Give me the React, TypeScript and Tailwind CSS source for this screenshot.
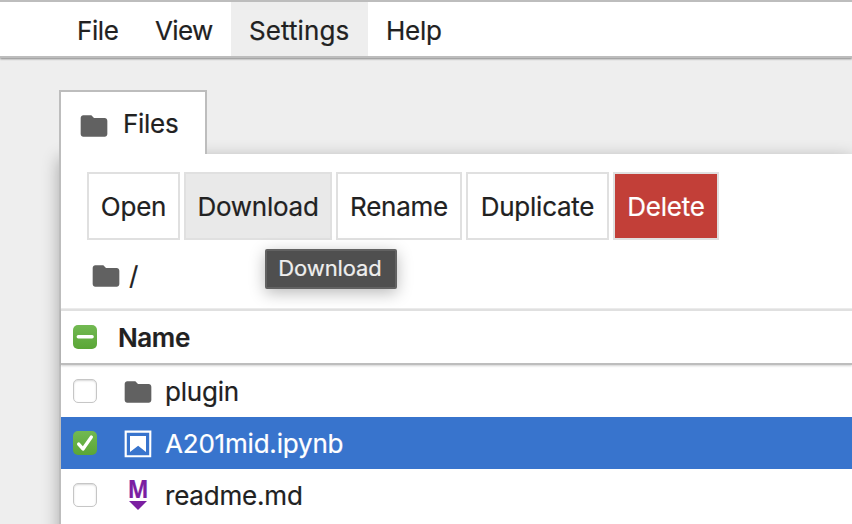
import type { ReactNode } from "react";

function FolderIcon({ className = "" }: { className?: string }) {
  return (
    <svg viewBox="0 0 24 24" className={`h-8 w-8 shrink-0 ${className}`} fill="#616161">
      <path d="M10 4H4c-1.1 0-1.99.9-1.99 2L2 18c0 1.1.9 2 2 2h16c1.1 0 2-.9 2-2V8c0-1.1-.9-2-2-2h-8l-2-2z" />
    </svg>
  );
}

function NotebookIcon() {
  return (
    <svg viewBox="0 0 22 22" className="mt-px h-8 w-8 shrink-0" fill="#fff">
      <path d="M18.7 3.3v15.4H3.3V3.3h15.4m1.5-1.5H1.8v18.3h18.3l.1-18.3z" />
      <path d="M16.5 16.5l-5.4-4.3-5.6 4.3v-11h11z" />
    </svg>
  );
}

function MarkdownIcon() {
  return (
    <div className="flex h-8 w-8 shrink-0 flex-col items-center text-[#7b1fa2]">
      <span className="h-[21px] origin-bottom scale-y-[1.12] font-['Open_Sans',sans-serif] text-[22px] leading-[21px] font-bold">
        M
      </span>
      <svg viewBox="0 0 18 9" className="mt-px h-[9px] w-[18px]" fill="currentColor">
        <path d="M0 0h18L9 9z" />
      </svg>
    </div>
  );
}

function Checkbox({ state }: { state: "off" | "on" | "mixed" }) {
  if (state === "off") {
    return (
      <span className="h-6 w-6 shrink-0 rounded-[5px] border border-[#c6c6c6] bg-white shadow-[inset_0_1px_2px_rgba(0,0,0,0.16)]" />
    );
  }
  return (
    <span className="h-6 w-6 shrink-0 rounded-[5px] bg-linear-to-b from-[#72b952] to-[#5aa636]">
      <svg viewBox="0 0 24 24" className="h-6 w-6" fill="none" stroke="#fff" strokeWidth="3.4" strokeLinecap="round" strokeLinejoin="round">
        {state === "on" ? <path d="M5.7 13.1l4.3 4.9 8.3-11.9" /> : <path d="M5.3 11.8h13.8" />}
      </svg>
    </span>
  );
}

function MenuItem({ children, className }: { children: ReactNode; className: string }) {
  return <div className={`flex h-full items-center pt-1 ${className}`}>{children}</div>;
}

function ToolButton({ children, className }: { children: ReactNode; className: string }) {
  return (
    <button className={`flex h-[68px] items-center justify-center border-2 border-[#e0e0e0] pt-0.5 tracking-[-0.25px] ${className}`}>
      {children}
    </button>
  );
}

function FileRow({ icon, name, state = "off", className = "" }: { icon: ReactNode; name: ReactNode; state?: "off" | "on"; className?: string }) {
  return (
    <div className={`flex h-[52px] items-center pl-3 ${className}`}>
      <Checkbox state={state} />
      <span className="ml-[25px]">{icon}</span>
      <span className="ml-[11px] pt-0.5 tracking-[-0.2px]">{name}</span>
    </div>
  );
}

export default function App() {
  return (
    <div className="flex h-[524px] w-[852px] flex-col overflow-hidden bg-[#eeeeee] font-['Inter',sans-serif] text-[26px] leading-8 whitespace-nowrap text-[#212121] [-webkit-text-stroke:0.2px_currentColor]">
      <nav className="flex h-[58px] shrink-0 border-y-2 border-[#bdbdbd] bg-white pl-[59px] shadow-[0_1px_2px_rgba(0,0,0,0.45)]">
        <MenuItem className="w-[78px] pl-[18px] tracking-[-0.4px]">File</MenuItem>
        <MenuItem className="w-[94px] pl-[18px] tracking-[-0.6px]">View</MenuItem>
        <MenuItem className="w-[137px] bg-[#eeeeee] pl-[18px] tracking-[0.1px]">Settings</MenuItem>
        <MenuItem className="pl-[18px] tracking-[-0.25px]">Help</MenuItem>
      </nav>

      <div className="mt-8 flex flex-1 flex-col pl-[59px]">
        <div className="z-10 flex h-16 w-[148px] shrink-0 items-center border-2 border-b-0 border-[#bdbdbd] bg-white pl-[17px]">
          <FolderIcon className="mt-1.5" />
          <span className="ml-[13px] pt-0.5 tracking-[-0.3px]">Files</span>
        </div>

        <main className="h-[400px] border-l-2 border-[#bdbdbd] bg-white shadow-[0_4px_16px_rgba(0,0,0,0.3)]">
          <div className="flex gap-1 pt-[18px] pl-[26px]">
            <ToolButton className="w-[93px]">Open</ToolButton>
            <div className="relative">
              <ToolButton className="w-[148px] bg-[#e9e9e9]">Download</ToolButton>
              <div className="absolute top-[77px] left-[81px] z-10 flex h-10 w-[132px] items-center justify-center rounded-[2px] border-2 border-[#626262] bg-[#4f4f4f] pr-0.5 pb-0.5 text-[22px] tracking-[-0.1px] text-[#eeeeee] shadow-[0_4px_16px_rgba(0,0,0,0.28)]">
                Download
              </div>
            </div>
            <ToolButton className="w-[126px]">Rename</ToolButton>
            <ToolButton className="w-[143px]">Duplicate</ToolButton>
            <ToolButton className="w-[106px] bg-[#c23f38] text-white">Delete</ToolButton>
          </div>

          <div className="flex h-[69px] items-center border-b border-[#eeeeee] pl-[29px]">
            <FolderIcon className="mt-1" />
            <span className="ml-[7px] pt-1">/</span>
          </div>

          <div className="flex h-14 items-center border-t-2 border-b-2 border-t-[#e0e0e0] border-b-[#bdbdbd] pl-3 shadow-[0_1px_2px_rgba(0,0,0,0.18)]">
            <Checkbox state="mixed" />
            <span className="ml-[21px] pt-0.5 font-semibold tracking-[-0.4px]">Name</span>
          </div>

          <FileRow icon={<FolderIcon className="mt-px" />} name="plugin" />
          <FileRow icon={<NotebookIcon />} name="A201mid.ipynb" state="on" className="bg-[#3874cd] text-white" />
          <FileRow icon={<MarkdownIcon />} name="readme.md" />
        </main>
      </div>
    </div>
  );
}
